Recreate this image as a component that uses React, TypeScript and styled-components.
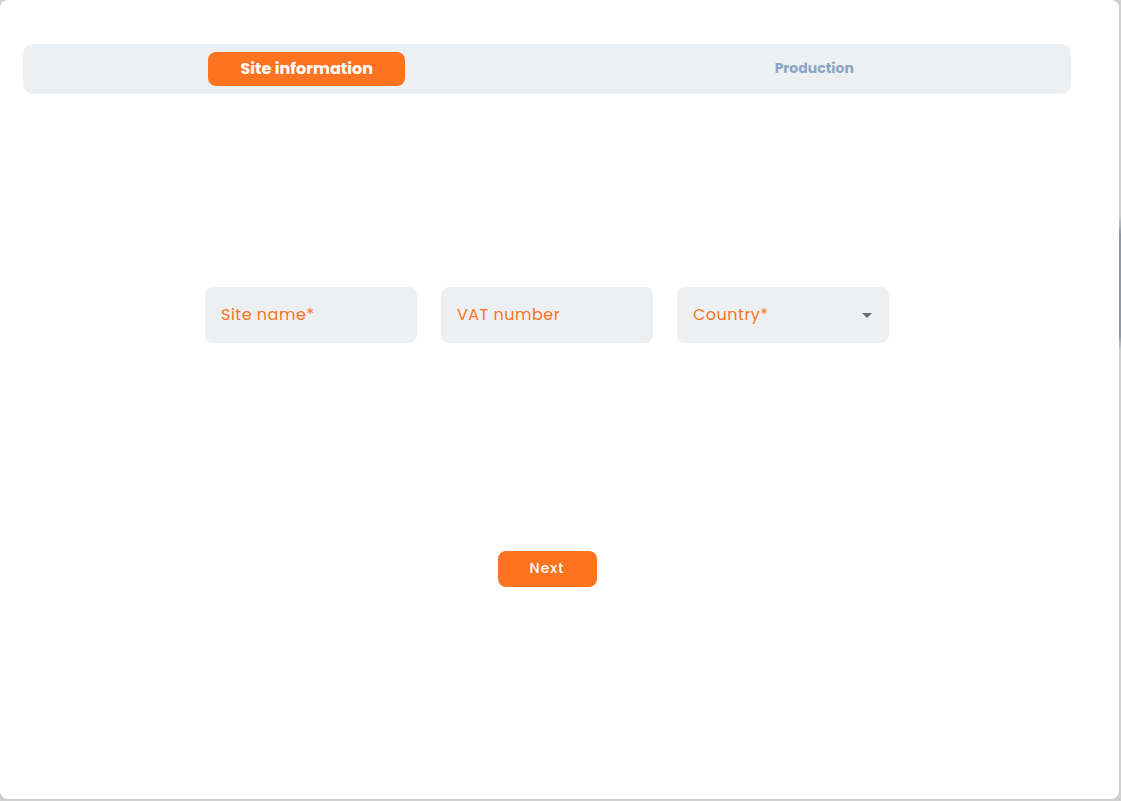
import styled, { createGlobalStyle } from "styled-components";

const GlobalStyle = createGlobalStyle`
  html, body {
    margin: 0;
    padding: 0;
  }
  body {
    width: 1121px;
    height: 801px;
    overflow: hidden;
    background: linear-gradient(
      to bottom,
      #cfcfcf 0,
      #cfcfcf 215px,
      #8d98a4 235px,
      #8d98a4 335px,
      #cfcfcf 350px
    );
    font-family: "Poppins", "Open Sans", sans-serif;
  }
`;

const orange = "#fd7320";

const Dialog = styled.div`
  width: 1119px;
  height: 799px;
  box-sizing: border-box;
  background: #ffffff;
  border-radius: 8px;
  padding: 44px 48px 0 23px;
  display: flex;
  flex-direction: column;
  align-items: center;
`;

const TabBar = styled.div`
  width: 100%;
  height: 50px;
  box-sizing: border-box;
  background: #edf0f3;
  border-radius: 10px;
  padding: 8px 3px 8px 30px;
  display: grid;
  grid-template-columns: 1fr 1fr;
`;

const Tab = styled.div<{ $active?: boolean }>`
  justify-self: center;
  width: 197px;
  height: 34px;
  box-sizing: border-box;
  padding-bottom: 2px;
  border-radius: 8px;
  display: flex;
  align-items: center;
  justify-content: center;
  background: ${(p) => (p.$active ? orange : "transparent")};
  color: ${(p) => (p.$active ? "#ffffff" : "#8ba6c4")};
  font-size: ${(p) => (p.$active ? "16px" : "14px")};
  font-weight: 700;
`;

const Fields = styled.div`
  margin-top: 193px;
  display: flex;
  gap: 24px;
`;

const Field = styled.div`
  width: 212px;
  height: 56px;
  box-sizing: border-box;
  background: #edf0f3;
  border-radius: 8px;
  padding: 0 16px 2px;
  display: flex;
  align-items: center;
  justify-content: space-between;
  color: ${orange};
  font-size: 16px;
  letter-spacing: 0.5px;
`;

const Arrow = styled.span`
  width: 0;
  height: 0;
  margin: 2px 1px 0 0;
  border-left: 5px solid transparent;
  border-right: 5px solid transparent;
  border-top: 5px solid #6b6b6b;
`;

const NextButton = styled.button`
  margin-top: 208px;
  width: 99px;
  height: 36px;
  padding: 0 0 2px;
  border: none;
  border-radius: 8px;
  background: ${orange};
  color: #ffffff;
  font-family: inherit;
  font-size: 14px;
  font-weight: 500;
  letter-spacing: 1px;
  cursor: pointer;
`;

export default function App() {
  return (
    <>
      <GlobalStyle />
      <Dialog>
        <TabBar>
          <Tab $active>Site information</Tab>
          <Tab>Production</Tab>
        </TabBar>
        <Fields>
          <Field>Site name*</Field>
          <Field>VAT number</Field>
          <Field>
            Country*
            <Arrow />
          </Field>
        </Fields>
        <NextButton>Next</NextButton>
      </Dialog>
    </>
  );
}
